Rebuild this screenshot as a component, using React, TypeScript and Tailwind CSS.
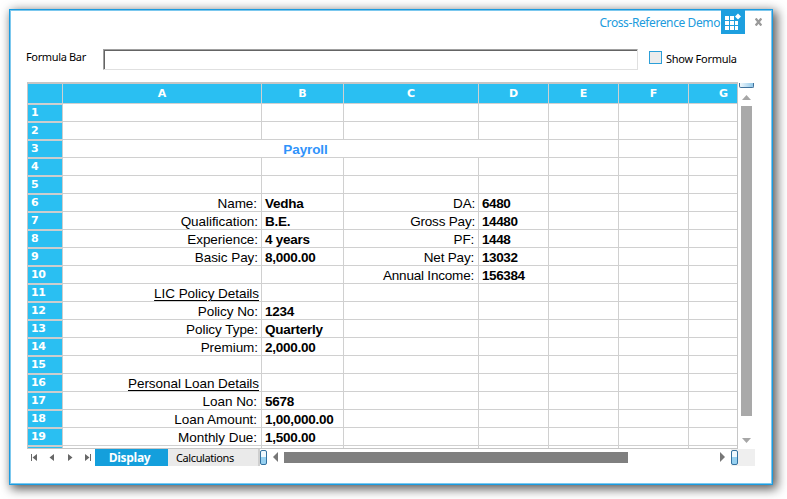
import React from "react";

type Cell = { t: string; cls?: string };
type RowData = { a?: Cell; b?: string; c?: Cell; d?: string };

const rows: Record<number, RowData> = {
  6: { a: { t: "Name:", cls: "pr-[4px]" }, b: "Vedha", c: { t: "DA:", cls: "pr-[3px]" }, d: "6480" },
  7: { a: { t: "Qualification:", cls: "pr-[3px]" }, b: "B.E.", c: { t: "Gross Pay:", cls: "pr-[3px]" }, d: "14480" },
  8: { a: { t: "Experience:", cls: "pr-[3px]" }, b: "4 years", c: { t: "PF:", cls: "pr-[4px]" }, d: "1448" },
  9: { a: { t: "Basic Pay:", cls: "pr-[3px]" }, b: "8,000.00", c: { t: "Net Pay:", cls: "pr-[4px]" }, d: "13032" },
  10: { c: { t: "Annual Income:", cls: "pr-[4px]" }, d: "156384" },
  11: { a: { t: "LIC Policy Details", cls: "pr-[2px] underline underline-offset-2" } },
  12: { a: { t: "Policy No:", cls: "pr-[3px]" }, b: "1234" },
  13: { a: { t: "Policy Type:", cls: "pr-[3px]" }, b: "Quarterly" },
  14: { a: { t: "Premium:", cls: "pr-[3px]" }, b: "2,000.00" },
  16: { a: { t: "Personal Loan Details", cls: "pr-[2px] underline underline-offset-2" } },
  17: { a: { t: "Loan No:", cls: "pr-[4px]" }, b: "5678" },
  18: { a: { t: "Loan Amount:", cls: "pr-[4px]" }, b: "1,00,000.00" },
  19: { a: { t: "Monthly Due:", cls: "pr-[4px]" }, b: "1,500.00" },
};

const cell = "h-[18px] shrink-0 border-r border-b border-[#d0d0d0] leading-[19px] whitespace-nowrap";

const columns = [
  { name: "A", w: "w-[199px]" },
  { name: "B", w: "w-[82px]" },
  { name: "C", w: "w-[135px]" },
  { name: "D", w: "w-[70px]" },
  { name: "E", w: "w-[70px]" },
  { name: "F", w: "w-[70px]" },
  { name: "G", w: "w-[70px]" },
];

function Row({ n }: { n: number }) {
  const r = rows[n] ?? {};
  return (
    <div className="flex h-[18px] shrink-0">
      <div className="h-[18px] w-[35px] shrink-0 border-t border-r border-b border-[#cdcdcd] bg-[#2abff2] pl-[3px] font-['DejaVu_Sans'] text-[11px] leading-[15px] font-bold tracking-[-0.3px] text-white">
        {n < 20 ? n : ""}
      </div>
      {n === 3 ? (
        <div className={`${cell} w-[486px] text-center text-[13.5px] font-bold tracking-[-0.1px] text-[#2f93fb]`}>Payroll</div>
      ) : (
        <>
          <div className={`${cell} w-[199px] text-right tracking-[-0.05px] ${r.a?.cls ?? ""}`}>{r.a?.t}</div>
          <div className={`${cell} w-[82px] pl-[3px] font-bold tracking-[-0.25px]`}>{r.b}</div>
          <div className={`${cell} w-[135px] text-right tracking-[-0.2px] ${r.c?.cls ?? ""}`}>{r.c?.t}</div>
          <div className={`${cell} w-[70px] pl-[3px] font-bold tracking-[-0.4px]`}>{r.d}</div>
        </>
      )}
      <div className={`${cell} w-[70px]`} />
      <div className={`${cell} w-[70px]`} />
      <div className={`${cell} w-[70px]`} />
    </div>
  );
}

function Sheet() {
  return (
    <div className="flex h-[367px] w-[711px] flex-col overflow-hidden border border-t-2 border-[#c6c6c6] font-['Liberation_Sans',sans-serif] text-[13.5px] text-black">
      <div className="flex h-5 shrink-0">
        <div className="w-[35px] shrink-0 border-r border-b border-[#d0d0d0] bg-[#2abff2]" />
        {columns.map((c) => (
          <div
            key={c.name}
            className={`${c.w} shrink-0 border-r border-b border-[#d0d0d0] bg-[#2abff2] text-center font-['DejaVu_Sans'] text-[11px] leading-[20px] font-bold text-white`}
          >
            {c.name}
          </div>
        ))}
      </div>
      {Array.from({ length: 20 }, (_, i) => (
        <Row key={i} n={i + 1} />
      ))}
    </div>
  );
}

function VerticalBar() {
  return (
    <div className="flex h-[367px] w-[17px] flex-col items-center">
      <div className="mt-px h-[5px] w-[15px] rounded-b-[2px] border border-t-0 border-[#41729c] bg-gradient-to-r from-[#f0f8fc] to-[#93c9e9]" />
      <svg className="mt-[7px] h-[5px] w-[9px]" viewBox="0 0 9 5">
        <path d="M0 5L4.5 0L9 5Z" fill="#a6a6a6" />
      </svg>
      <div className="mt-[6px] h-[310px] w-[11px] bg-[#a9a9a9]" />
      <svg className="mt-[22px] h-[5px] w-[9px]" viewBox="0 0 9 5">
        <path d="M0 0L4.5 5L9 0Z" fill="#a6a6a6" />
      </svg>
    </div>
  );
}

const Splitter = () => (
  <div className="mt-px h-[15px] w-[7px] shrink-0 rounded-[2px] border border-[#33719f] bg-gradient-to-b from-[#eff8fd] from-45% to-[#96d0f0] to-50%" />
);

function BottomBar() {
  return (
    <div className="flex h-[17px] w-[728px]">
      <svg className="h-[17px] w-[68px] shrink-0" viewBox="0 0 68 17" fill="#686868">
        <path d="M4 5h1v7H4zM10 5v7L5.500 8.500zM27 5v7L22.500 8.500zM41 5v7l4.500-3.500zM58 5v7l4.500-3.500zM63 5h1v7h-1z" />
      </svg>
      <div className="w-[73px] shrink-0 bg-[#149fdc] pr-[4px] text-center font-['Open_Sans'] text-[12px] leading-[17px] font-bold tracking-[-0.3px] text-white">
        Display
      </div>
      <div className="w-[90px] shrink-0 bg-[#eaeaea] pl-[8px] font-['Noto_Sans'] text-[11px] leading-[17px] tracking-[-0.4px] text-black">
        Calculations
      </div>
      <div className="w-[2px] shrink-0 bg-[#cfcfcf]" />
      <Splitter />
      <svg className="mt-[3px] ml-[6px] h-[10px] w-[5px] shrink-0" viewBox="0 0 5 10">
        <path d="M5 0v10L0 5Z" fill="#777" />
      </svg>
      <div className="mt-[3px] ml-[6px] h-[11px] w-[344px] shrink-0 bg-[#7f7f7f]" />
      <svg className="mt-[3px] ml-[92px] h-[10px] w-[5px] shrink-0" viewBox="0 0 5 10">
        <path d="M0 0v10l5-5Z" fill="#777" />
      </svg>
      <div className="ml-[6px] flex w-6 bg-[#efefef]">
        <Splitter />
      </div>
    </div>
  );
}

export default function App() {
  return (
    <div className="h-[499px] w-[787px] overflow-hidden bg-white p-[9px]">
      <div className="h-[476px] w-[764px] border border-[#1b9be0] bg-white font-['Noto_Sans',sans-serif] text-black shadow-[3px_3px_10px_1px_rgba(0,0,0,0.65)]">
        <div className="h-[474px] w-[762px] border border-[#7cc8ee] pl-4">
          <div className="flex h-[23px] justify-end">
            <span className="text-[12px] leading-[23px] tracking-[-0.4px] whitespace-nowrap text-[#219bdc]">Cross-Reference Demo</span>
            <svg className="-mt-px ml-px h-6 w-6" viewBox="0 0 24 24">
              <path d="M0 0h24v24H0z" fill="#1d9fdf" />
              <path
                d="M4 6h4v4H4zM9 6h4v4H9zM4 11h4v4H4zM9 11h4v4H9zM14 11h3v4h-3zM4 16h4v4H4zM9 16h4v4H9zM14 16h3v4h-3zM17 3.500l3 3-3 3-3-3z"
                fill="#fff"
              />
            </svg>
            <svg className="mt-[7px] mr-[9px] ml-[10px] h-[8px] w-[7px]" viewBox="0 0 7 8">
              <path d="M0.700 0.500L6.300 7.500M6.300 0.500L0.700 7.500" stroke="#9a9a9a" strokeWidth="2.300" />
            </svg>
          </div>
          <div className="mt-[15px] flex h-[21px]">
            <span className="-ml-px w-[76px] text-[11px] leading-[16px] tracking-[-0.35px] whitespace-nowrap">Formula Bar</span>
            <div className="ml-px h-[21px] w-[535px] border border-[#e0e0e0] border-t-[#a0a0a0] border-l-[#a0a0a0]">
              <div className="h-full w-full border-t border-l border-[#646464]" />
            </div>
            <div className="mt-[2px] ml-[11px] h-[13px] w-[13px] border border-[#2c9fd8] bg-[#ececec]" />
            <span className="ml-[4px] text-[11px] leading-[20px] tracking-[-0.25px] whitespace-nowrap">Show Formula</span>
          </div>
          <div className="mt-3 flex">
            <Sheet />
            <VerticalBar />
          </div>
          <BottomBar />
        </div>
      </div>
    </div>
  );
}
